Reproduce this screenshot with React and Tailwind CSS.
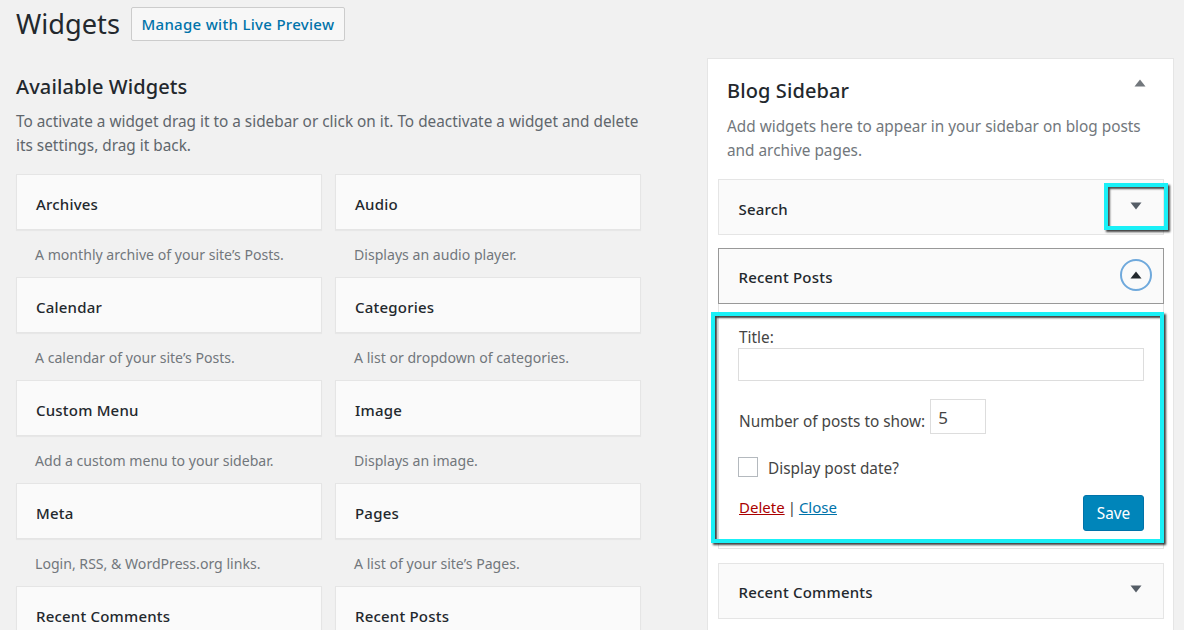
import React from "react";

const widgets = [
  ["Archives", "A monthly archive of your site’s Posts.", "Audio", "Displays an audio player."],
  ["Calendar", "A calendar of your site’s Posts.", "Categories", "A list or dropdown of categories."],
  ["Custom Menu", "Add a custom menu to your sidebar.", "Image", "Displays an image."],
  ["Meta", "Login, RSS, & WordPress.org links.", "Pages", "A list of your site’s Pages."],
  ["Recent Comments", "", "Recent Posts", ""],
];

const WidgetCard = ({ title, desc }) => (
  <div className="w-[306px]">
    <div className="h-[56px] flex items-center pl-[19px] pt-[4px] bg-[#fafafa] border border-[#e5e5e5] shadow-[0_1px_1px_rgba(0,0,0,0.04)] text-[15px] tracking-[0.2px] font-medium text-[#23282d]">
      {title}
    </div>
    {desc && <p className="mt-[14px] h-[33px] pl-[19px] text-[14.1px] leading-[22px] text-[#72777c] whitespace-nowrap">{desc}</p>}
  </div>
);

const Arrow = ({ up, color }) => (
  <svg width="12" height="8" viewBox="0 0 12 8" className="block">
    <path d={up ? "M6 0.5L11.5 7.5H0.5Z" : "M0.5 0.5H11.5L6 7.5Z"} fill={color} />
  </svg>
);

const SidebarRow = ({ title, titleClass, children, className }) => (
  <div className={`relative h-[56px] flex items-center justify-between pl-[19.5px] bg-[#fafafa] border text-[15px] tracking-[0.2px] font-medium text-[#23282d] ${className}`}>
    <span className={titleClass}>{title}</span>
    {children}
  </div>
);

export default function App() {
  return (
    <div className="h-[630px] w-[1184px] overflow-hidden bg-[#f1f1f1] flex font-['Noto_Sans',sans-serif]">
      <div className="w-[707px] shrink-0 pl-[16px]">
        <div className="flex items-center h-[48px] pb-[1px]">
          <h1 className="text-[27.2px] leading-[36px] text-[#23282d]">Widgets</h1>
          <button className="ml-[11px] h-[34px] w-[214px] pt-[1px] bg-[#f7f7f7] border border-[#ccc] rounded-[2px] text-[15px] tracking-[0.3px] font-medium text-[#0073aa]">
            Manage with Live Preview
          </button>
        </div>
        <h2 className="mt-[23px] text-[20px] tracking-[0.1px] leading-[32px] font-medium text-[#23282d]">Available Widgets</h2>
        <p className="mt-[6px] w-[640px] text-[15.35px] leading-[24px] text-[#5f666c]">
          To activate a widget drag it to a sidebar or click on it. To deactivate a widget and delete its settings, drag it back.
        </p>
        <div className="mt-[17px] flex flex-col">
          {widgets.map((w) => (
            <div key={w[0]} className="flex gap-[13px]">
              <WidgetCard title={w[0]} desc={w[1]} />
              <WidgetCard title={w[2]} desc={w[3]} />
            </div>
          ))}
        </div>
      </div>

      <div className="mt-[58px] w-[467px] h-[600px] bg-white border border-[#e5e5e5] pl-[10px] pr-[9px]">
        <div className="relative pl-[9px] pt-[16px]">
          <h2 className="text-[20px] tracking-[0.1px] leading-[32px] font-medium text-[#23282d]">Blog Sidebar</h2>
          <p className="mt-[7px] w-[430px] text-[15.35px] leading-[24px] text-[#72777c]">
            Add widgets here to appear in your sidebar on blog posts and archive pages.
          </p>
          <div className="absolute right-[18px] top-[20px]">
            <Arrow up color="#72777c" />
          </div>
        </div>

        <SidebarRow title="Search" titleClass="pt-[4px]" className="mt-[17px] border-[#e5e5e5]">
          <div className="absolute left-[385px] top-[3px] w-[64px] h-[47px] pb-[2px] border-[4px] border-[#19f0f7] shadow-[2px_2px_2px_rgba(0,0,0,0.75),inset_2px_2px_2px_rgba(0,0,0,0.7)] flex items-center justify-center">
            <Arrow color="#555d66" />
          </div>
        </SidebarRow>

        <SidebarRow title="Recent Posts" titleClass="pt-[2px]" className="mt-[13px] border-[#999]">
          <div className="mr-[11px] mb-[3px] w-[32px] h-[32px] rounded-full border-2 border-[#6fa9dc] flex items-center justify-center">
            <Arrow up color="#23282d" />
          </div>
        </SidebarRow>

        <div className="border-x border-b border-[#e5e5e5] bg-white pt-[8px] pb-[5px]">
          <div className="-ml-[8px] w-[453px] h-[231px] border-[4px] border-[#19f0f7] shadow-[2px_2px_2px_rgba(0,0,0,0.75),inset_2px_2px_2px_rgba(0,0,0,0.75)] pl-[24px] pr-[16px] text-[15.35px] text-[#444]">
            <div className="pt-[10px] leading-[22px]">Title:</div>
            <input className="block -ml-[1px] w-[406px] h-[33px] bg-white border border-[#ddd]" />
            <div className="mt-[18px] flex items-end h-[35px]">
              <span className="leading-[24px] mb-[1px]">Number of posts to show:</span>
              <div className="ml-[5px] w-[56px] h-[35px] border border-[#ddd] pl-[7px] text-[17px] leading-[35px]">5</div>
            </div>
            <div className="mt-[23px] -ml-[1px] flex items-center h-[20px]">
              <div className="w-[20px] h-[20px] border border-[#b4b9be]" />
              <span className="ml-[10px] pt-[2px]">Display post date?</span>
            </div>
            <div className="mt-[6px] flex justify-between">
              <div className="mt-[12px] flex leading-[24px] text-[15px]">
                <span className="text-[#a00] underline">Delete</span>
                <span className="ml-[3px]">|</span>
                <span className="ml-[3px] text-[#0073aa] underline">Close</span>
              </div>
              <button className="w-[61px] h-[36px] mt-[12px] pt-[1px] rounded-[3px] bg-[#0085ba] border border-[#0073aa] text-[15.35px] text-white">Save</button>
            </div>
          </div>
        </div>

        <SidebarRow title="Recent Comments" titleClass="pt-[2px]" className="mt-[14px] border-[#e5e5e5]">
          <div className="mr-[21px] mb-[4px]">
            <Arrow color="#555d66" />
          </div>
        </SidebarRow>
      </div>
    </div>
  );
}
